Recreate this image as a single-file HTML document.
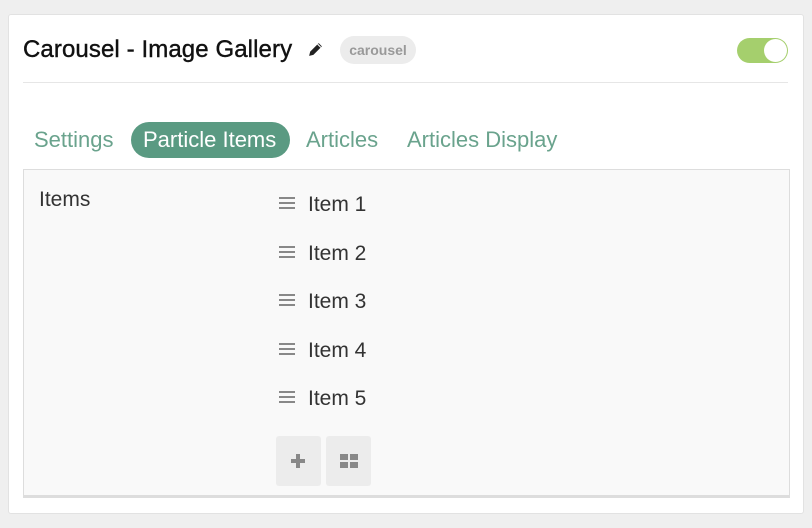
<!DOCTYPE html>
<html><head><style>
*{margin:0;padding:0;box-sizing:border-box}
body{width:812px;height:528px;background:#efefef;font-family:"Liberation Sans",sans-serif;position:relative;overflow:hidden}
.card{position:absolute;left:8px;top:14px;width:796px;height:500px;background:#fff;border:1px solid #e2e2e2;border-radius:3px}
.abs{position:absolute;white-space:nowrap}
.title{left:14px;top:21px;font-size:24px;color:#111;letter-spacing:0.1px;-webkit-text-stroke:0.4px #111}
.badge{left:331px;top:21px;width:76px;height:28px;border-radius:14px;background:#ececec;color:#999;font-size:14px;font-weight:bold;text-align:center;line-height:28px}
.toggle{left:728px;top:23px;width:51px;height:25px;border-radius:13px;background:#a5cf6d}
.knob{position:absolute;right:1px;top:1px;width:23px;height:23px;border-radius:50%;background:#fff}
.hr{left:14px;top:67px;width:765px;height:1px;background:#e6e6e6}
.tab{top:112px;font-size:22px;color:#6aa38d}
.pill{left:122px;top:107px;width:159px;height:36px;border-radius:18px;background:#5a9a82}
.panel{left:14px;top:154px;width:767px;height:329px;background:#f9f9f9;border:1px solid #ddd;border-bottom:3px solid #ddd}
.it{font-size:21px;color:#333}
.ham{width:16px;height:12px;border-top:2px solid #888;border-bottom:2px solid #888}
.ham:after{content:"";position:absolute;left:0;top:3px;width:16px;height:2px;background:#888}
.btn{width:45px;height:50px;background:#ececec;border-radius:3px}
</style></head><body>
<div class="card">
<div class="abs title">Carousel - Image Gallery</div>
<svg class="abs" style="left:298px;top:26px" width="17" height="17" viewBox="0 0 16 16"><path d="M2 14l1-4 8-8 3 3-8 8z M2 14l3-1" fill="#222"/><path d="M10 3l3 3" stroke="#fff" stroke-width="1"/></svg>
<div class="abs badge">carousel</div>
<div class="abs toggle"><div class="knob"></div></div>
<div class="abs hr"></div>
<div class="abs pill"></div>
<div class="abs tab" style="left:25px">Settings</div>
<div class="abs tab" style="left:134px;color:#fff">Particle Items</div>
<div class="abs tab" style="left:297px">Articles</div>
<div class="abs tab" style="left:398px">Articles Display</div>
<div class="abs panel">
<div class="abs it" style="left:15px;top:18px">Items</div>
<div class="abs ham" style="left:255px;top:27px"></div><div class="abs it" style="left:284px;top:23px">Item 1</div>
<div class="abs ham" style="left:255px;top:76px"></div><div class="abs it" style="left:284px;top:72px">Item 2</div>
<div class="abs ham" style="left:255px;top:124px"></div><div class="abs it" style="left:284px;top:120px">Item 3</div>
<div class="abs ham" style="left:255px;top:173px"></div><div class="abs it" style="left:284px;top:169px">Item 4</div>
<div class="abs ham" style="left:255px;top:221px"></div><div class="abs it" style="left:284px;top:217px">Item 5</div>
<div class="abs btn" style="left:252px;top:266px"><svg style="position:absolute;left:15px;top:18px" width="14" height="14"><rect x="5" y="0" width="4" height="14" fill="#888"/><rect x="0" y="5" width="14" height="4" fill="#888"/></svg></div>
<div class="abs btn" style="left:302px;top:266px"><svg style="position:absolute;left:14px;top:18px" width="18" height="14"><rect x="0" y="0" width="8" height="6" fill="#888"/><rect x="10" y="0" width="8" height="6" fill="#888"/><rect x="0" y="8" width="8" height="6" fill="#888"/><rect x="10" y="8" width="8" height="6" fill="#888"/></svg></div>
</div>
</div>
</body></html>
